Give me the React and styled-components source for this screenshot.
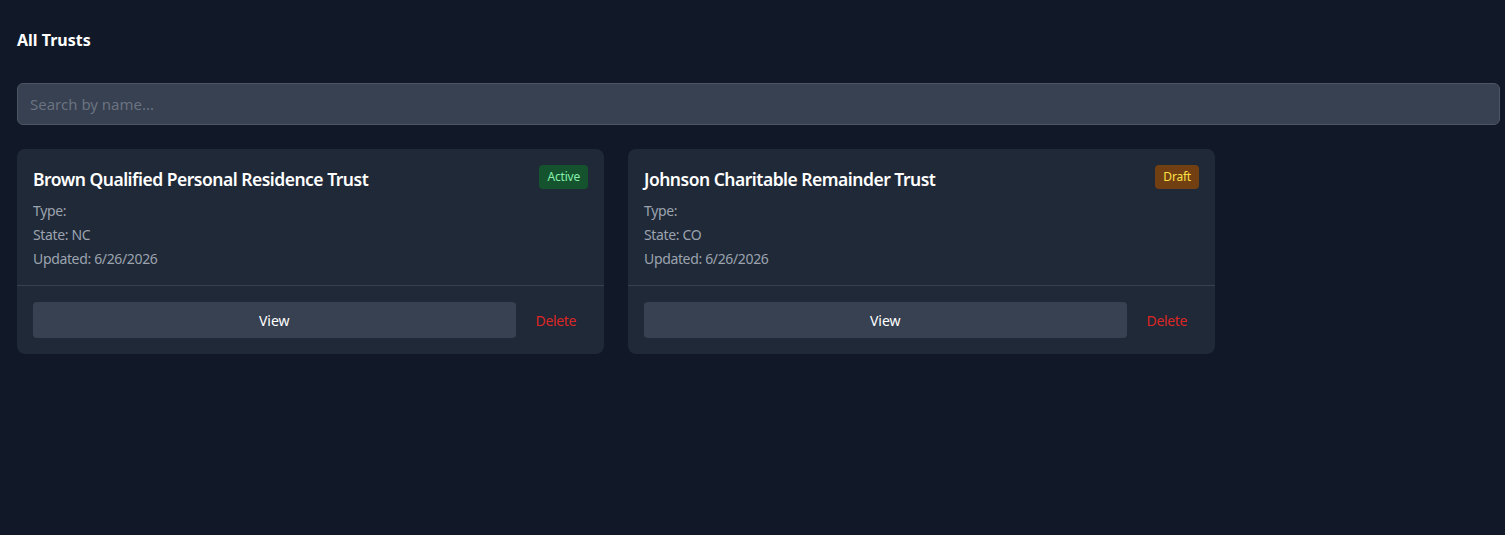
import styled, { createGlobalStyle } from "styled-components";

const GlobalStyle = createGlobalStyle`
    * { box-sizing: border-box; }
    body {
        margin: 0;
        background-color: #111827;
        font-family: "Noto Sans", "Open Sans", sans-serif;
        color: #ffffff;
    }
`;

const trusts = [
    { id: 1, name: "Brown Qualified Personal Residence Trust", type: "", state: "NC", updated: "6/26/2026", status: "Active" },
    { id: 2, name: "Johnson Charitable Remainder Trust", type: "", state: "CO", updated: "6/26/2026", status: "Draft" },
];

export default function App() {
    return (
        <>
            <GlobalStyle />
            <Page>
                <Heading>All Trusts</Heading>
                <Search placeholder="Search by name..." />
                <Grid>
                    {trusts.map(trust => <TrustCard trust={trust} key={trust.id} />)}
                </Grid>
            </Page>
        </>
    );
}

function TrustCard(props) {
    const { trust } = props;
    return (
        <Card>
            <CardBody>
                <CardHeader>
                    <Title>{trust.name}</Title>
                    <Badge status={trust.status}>{trust.status}</Badge>
                </CardHeader>
                <Meta>
                    <p>Type: {trust.type}</p>
                    <p>State: {trust.state}</p>
                    <p>Updated: {trust.updated}</p>
                </Meta>
            </CardBody>
            <CardFooter>
                <ViewButton>View</ViewButton>
                <DeleteButton>Delete</DeleteButton>
            </CardFooter>
        </Card>
    );
}

const Page = styled.div`
    padding: 28px 5px 40px 17px;
    min-height: 535px;
    `;

const Heading = styled.h2`
    margin: 0 0 31px 0;
    font-size: 16px;
    line-height: 24px;
    font-weight: 700;
    `;

const Search = styled.input`
    display: block;
    width: 100%;
    height: 42px;
    padding: 0 12px;
    background-color: #374151;
    border: 1px solid #4b5563;
    border-radius: 6px;
    color: #ffffff;
    font-family: inherit;
    font-size: 15px;
    margin-bottom: 24px;
    outline: none;

    &::placeholder {
        color: #6b7280;
    }
    `;

const Grid = styled.div`
    display: grid;
    grid-template-columns: repeat(2, 587px);
    column-gap: 24px;
    `;

const Card = styled.div`
    background-color: #1f2937;
    border-radius: 8px;
    overflow: hidden;
    `;

const CardBody = styled.div`
    padding: 16px;
    border-bottom: 1px solid #374151;
    `;

const CardHeader = styled.div`
    display: flex;
    justify-content: space-between;
    align-items: flex-start;
    `;

const Title = styled.h3`
    margin: 0;
    font-size: 17.5px;
    line-height: 28px;
    font-weight: 600;
    letter-spacing: -0.5px;
    `;

const Badge = styled.span`
    padding: 0 8px;
    height: 24px;
    line-height: 24px;
    border-radius: 4px;
    font-size: 12px;
    letter-spacing: -0.2px;
    background-color: ${props => props.status === "Active" ? "#14532d" : "#713f12"};
    color: ${props => props.status === "Active" ? "#86efac" : "#fde047"};
    `;

const Meta = styled.div`
    margin-top: 8px;
    display: flex;
    flex-direction: column;
    row-gap: 4px;
    font-size: 14px;
    line-height: 20px;
    letter-spacing: -0.35px;
    color: #9ca3af;

    p {
        margin: 0;
    }
    `;

const CardFooter = styled.div`
    display: flex;
    align-items: center;
    column-gap: 8px;
    padding: 16px;
    `;

const ViewButton = styled.button`
    flex: 1;
    height: 36px;
    background-color: #374151;
    border: none;
    border-radius: 4px;
    color: #ffffff;
    font-family: inherit;
    font-size: 14px;
    `;

const DeleteButton = styled.button`
    height: 36px;
    padding: 0 12px;
    background: none;
    border: none;
    color: #dc2626;
    font-family: inherit;
    font-size: 14px;
    letter-spacing: -0.35px;
    `;
